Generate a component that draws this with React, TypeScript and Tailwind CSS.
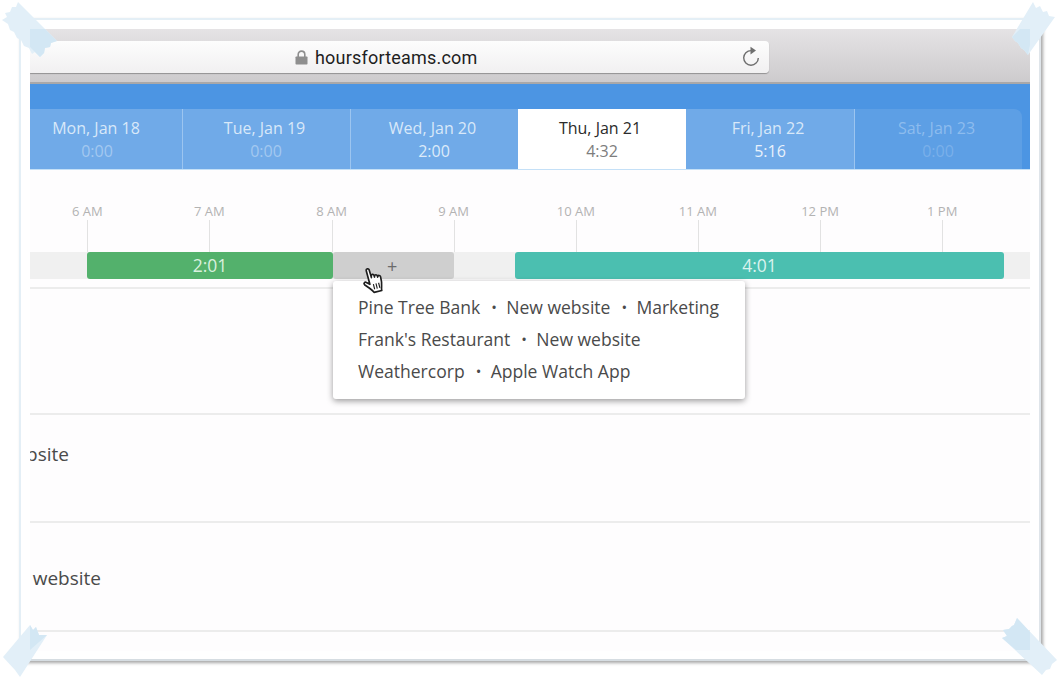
import React from "react";

const tabs = [
  { d: "Mon, Jan 18", h: "0:00", cls: "-ml-[16px] bg-[#70aae8] text-[#d8e8f9]", hc: "text-[#a3c8f0] -ml-[2px]", br: "" },
  { d: "Tue, Jan 19", h: "0:00", cls: "bg-[#70aae8] text-[#d8e8f9]", hc: "text-[#a3c8f0] -ml-[1px]", br: "border-l border-[#9cc5f0]" },
  { d: "Wed, Jan 20", h: "2:00", cls: "bg-[#70aae8] text-[#d8e8f9]", hc: "text-[#dceafa] -ml-[1px]", br: "border-l border-[#9cc5f0]" },
  { d: "Thu, Jan 21", h: "4:32", cls: "bg-white text-[#2b2b2b]", hc: "text-[#7d7d7d]", br: "" },
  { d: "Fri, Jan 22", h: "5:16", cls: "bg-[#70aae8] text-[#d8e8f9]", hc: "text-[#e8f1fb]", br: "" },
  { d: "Sat, Jan 23", h: "0:00", cls: "bg-[#5d9fe5] text-[#8dbcee] rounded-tr-lg", hc: "text-[#7ab0ea] -ml-[1px]", br: "border-l border-[#9cc5f0]" },
];
const hours = ["6 AM", "7 AM", "8 AM", "9 AM", "10 AM", "11 AM", "12 PM", "1 PM"];
const menu = [
  ["Pine Tree Bank", "New website", "Marketing"],
  ["Frank's Restaurant", "New website"],
  ["Weathercorp", "Apple Watch App"],
];

function Tape() {
  return (
    <svg className="absolute inset-0 pointer-events-none" width="1059" height="679" viewBox="0 0 1059 679">
      <g fill="#e2eff8">
        <polygon points="18,2 57,41 51,43 50,47 45,48 44,53 40,57 35,52 32,54 29,48 24,46 21,40 17,38 14,32 10,30 8,24 2,20 7,17 5,13 10,12 12,7 16,7" />
        <polygon points="1033,2 1036,8 1040,6 1043,12 1047,11 1049,16 1055,17 1028,55 1024,50 1021,48 1018,43 1015,41 1012,37" />
        <polygon points="30,625 33,630 36,627 39,635 47,635 20,677 15,670 3,657" />
        <polygon points="1017,618 1057,660 1052,664 1050,669 1046,670 1042,675 1002,638 1007,636 1003,630 1009,629 1012,626 1014,625" />
      </g>
      <g fill="#d3e7f4">
        <polygon points="30,29 45,29 57,41 51,43 50,47 45,48 44,53 40,57 30,47" />
        <polygon points="1020,29 1030,29 1030,45 1028,55 1024,50 1021,48 1018,43 1015,41 1012,37" />
        <polygon points="30,625 33,630 36,627 39,635 47,635 30,650" />
        <polygon points="1017,618 1030,632 1030,650 1016,650 1002,638 1007,636 1003,630 1009,629 1012,626 1014,625" />
      </g>
    </svg>
  );
}

function HandCursor() {
  return (
    <svg width="24" height="28" viewBox="0 0 24 28" className="absolute left-[362px] top-[267px] scale-[1.12]">
      <g transform="rotate(-14 12 14)">
        <path
          d="M7.5 3.2c0-1.6 2.6-1.6 2.7 0l.3 7.3 .2-1.6c.2-1.4 2.4-1.3 2.5.2l.1 1.6 .3-1c.4-1.2 2.3-.9 2.4.5l0 1.2 .4-.6c.6-1 2.2-.5 2.2.8 0 3-.2 5.6-1 8-.5 1.6-.9 3-.9 4.3H9.6c-.4-1.6-1.6-2.9-3-4.6L3 15.2c-.9-1.3.9-2.7 2.1-1.6l2.6 2.4z"
          fill="#fff"
          stroke="#1d1d1d"
          strokeWidth="1.5"
          strokeLinejoin="round"
        />
        <path d="M10.8 16.5v4.8M13.2 16.5v4.8M15.6 16.5v4.8" stroke="#1d1d1d" strokeWidth="1" />
      </g>
    </svg>
  );
}

export default function App() {
  return (
    <div className="relative w-[1059px] h-[679px] overflow-hidden bg-white font-['Open_Sans',sans-serif]">
      <div className="ml-[19px] mt-[18px] w-[1022px] h-[643px] border-2 border-t-[#e4eff6] border-l-[#e4eff6] border-r-[#dfe5ea] border-b-[#d6dde2] bg-white px-[9px] pt-[9px] pb-[8px] shadow-[2px_2px_3px_rgba(60,60,60,0.45)]">
        <div className="h-full flex flex-col overflow-hidden bg-[#fefdfe]">
          {/* browser bar */}
          <div className="h-[55px] shrink-0 flex items-start pt-[12px] border-b-2 border-[#a9a8a9] bg-gradient-to-b from-[#e5e3e5] to-[#cdcbcd]">
            <div className="w-[739px] h-[32px] flex items-center rounded-r-[4px] bg-gradient-to-b from-[#fdfdfd] to-[#f1f0f1] shadow-[0_1px_1px_rgba(0,0,0,0.3)]">
              <svg width="13" height="15" viewBox="0 0 13 15" className="ml-[265px] text-[#8e8e8e]">
                <path d="M3.2 7V4.4a3.3 3.3 0 0 1 6.6 0V7" fill="none" stroke="currentColor" strokeWidth="1.6" />
                <rect x="0.5" y="6.5" width="12" height="8" rx="0.8" fill="currentColor" />
              </svg>
              <span className="ml-[7px] mt-[1px] text-[18px] leading-none text-[#1e1e1e] font-['Roboto',sans-serif] tracking-[0.2px]">hoursforteams.com</span>
              <svg width="20" height="22" viewBox="0 0 20 22" className="ml-auto mr-[8px] text-[#6f6f6f]">
                <path d="M10 4.6A7.3 7.3 0 1 0 17.3 12" fill="none" stroke="currentColor" strokeWidth="1.4" />
                <polygon points="9.5,0.8 15,4.6 9.5,8.4" fill="currentColor" />
              </svg>
            </div>
          </div>
          {/* tabs */}
          <div className="h-[86px] shrink-0 flex items-end bg-[#4c95e3] border-b border-[#c4e0f7]">
            {tabs.map((t) => (
              <div
                key={t.d}
                className={`w-[168px] h-[60px] shrink-0 flex flex-col items-center pt-[8px] text-[16px] leading-[23px] ${t.cls} ${t.br}`}
              >
                <span className="-ml-[4px]">{t.d}</span>
                <span className={t.hc}>{t.h}</span>
              </div>
            ))}
          </div>
          {/* hour axis */}
          <div className="h-[82px] shrink-0 flex pt-[32px]">
            {hours.map((h, i) => (
              <div key={h} className={`w-[122.14px] shrink-0 flex flex-col items-center ${i === 0 ? "-ml-[3.27px]" : ""}`}>
                <span className="-ml-[1px] text-[13px] leading-[18px] text-[#b3b3b3] whitespace-nowrap">{h}</span>
                <span className="w-px h-[32px] bg-[#e2e2e2]" />
              </div>
            ))}
          </div>
          {/* bars */}
          <div className="h-[27px] shrink-0 flex bg-[#f0f0f0] text-[17.5px] text-[#d9f0df]">
            <div className="ml-[57px] w-[246px] rounded-[3px] bg-[#53b16c] flex items-center justify-center">2:01</div>
            <div className="w-[121px] rounded-[3px] bg-[#cfcfcf] pl-[54px]">
              <span className="block text-[18px] leading-[28px] text-[#6b6b6b]">+</span>
            </div>
            <div className="ml-[61px] w-[489px] rounded-[3px] bg-[#4bbfb0] flex items-center justify-center text-[#daf3ef]">4:01</div>
          </div>
          {/* rows */}
          <div className="mt-[8px] h-[128px] shrink-0 border-t-2 border-b-2 border-[#ececec]" />
          <div className="h-[108px] shrink-0 border-b-2 border-[#ececec] flex items-start pt-[25px] text-[19px] leading-[28px] text-[#4a4a4a]">
            <div className="w-[39px] overflow-hidden flex justify-end whitespace-nowrap">website</div>
          </div>
          <div className="h-[109px] shrink-0 border-b-2 border-[#ececec] flex items-start pt-[41px] text-[19px] leading-[28px] text-[#4a4a4a]">
            <div className="w-[71px] overflow-hidden flex justify-end whitespace-nowrap">website</div>
          </div>
        </div>
      </div>

      {/* popover */}
      <div className="absolute left-[333px] top-[281px] w-[412px] h-[118px] rounded-[3px] bg-white pt-[10px] pl-[25px] shadow-[0_2px_6px_rgba(0,0,0,0.4)] text-[17.55px] leading-[32px] text-[#4a4a4a]">
        {menu.map((row) => (
          <div key={row[0]} className="flex whitespace-nowrap">
            {row.map((c, i) => (
              <span key={c} className="flex">
                {i > 0 && <span className="w-[26px] pl-[11px] text-[15px]">•</span>}
                {c}
              </span>
            ))}
          </div>
        ))}
      </div>
      <HandCursor />
      <Tape />
    </div>
  );
}
